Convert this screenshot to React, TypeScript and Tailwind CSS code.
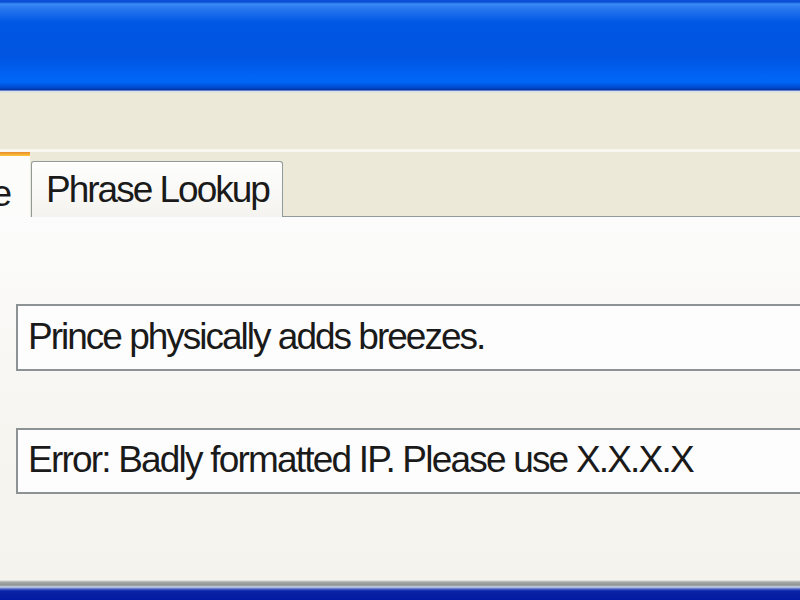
export default function App() {
  const font = { fontFamily: '"Liberation Sans", Arial, sans-serif' };

  return (
    <div className="w-[800px] h-[600px] overflow-hidden flex flex-col bg-[#ece9d8]" style={font}>
      {/* title bar */}
      <div className="h-[93px] shrink-0 bg-[linear-gradient(to_bottom,#0a4fd6_0px,#0a4fd6_2px,#3b8cf6_4px,#2a78f0_8px,#0058e4_22px,#0054e0_55px,#0063f4_76px,#0066f6_82px,#0048cc_88px,#00309e_90px,#cfd8ea_91px,#ece9d8_93px)]" />

      {/* beige strip */}
      <div className="h-[56px] shrink-0 bg-[#ece9d8]" />
      <div className="h-[3px] shrink-0 bg-[#f8f6ee]" />

      {/* tab row */}
      <div className="h-[65px] shrink-0 flex items-end bg-[#ece9d8]">
        <div className="w-[30px] h-[65px] flex flex-col bg-[#fcfcfb]">
          <div className="h-[4px] bg-[linear-gradient(to_bottom,#e68b2c,#ffc73c)]" />
          <div className="flex-1 flex justify-end overflow-hidden pr-[20px] pt-[10px]">
            <span className="whitespace-nowrap text-[37px] tracking-[-2px] text-[#1a1a1a]">Phrase</span>
          </div>
        </div>
        <div className="w-[252px] h-[56px] ml-[1px] border border-b-0 border-[#919b9c] rounded-t-[3px] bg-[linear-gradient(to_bottom,#fefefe,#f4f3ef)] flex items-center pl-[14px]">
          <span className="whitespace-nowrap text-[37px] tracking-[-2px] text-[#1a1a1a] leading-none">Phrase Lookup</span>
        </div>
        <div className="flex-1 h-px bg-[#919b9c]" />
      </div>

      {/* panel */}
      <div className="flex-1 flex flex-col bg-[linear-gradient(to_bottom,#fcfcfc,#f6f5f0_60%,#f4f3ee)] pl-[16px] pt-[87px]">
        <div className="h-[67px] -mr-[20px] border-2 border-[#8d9294] bg-[#fdfdfd] flex items-center pl-[10px] pb-[2px]">
          <span className="whitespace-nowrap text-[37px] tracking-[-2px] text-[#1a1a1a] leading-none">Prince physically adds breezes.</span>
        </div>
        <div className="h-[66px] mt-[57px] -mr-[20px] border-2 border-[#8d9294] bg-[#fdfdfd] flex items-center pl-[10px] pb-[4px]">
          <span className="whitespace-nowrap text-[37px] tracking-[-1.8px] text-[#1a1a1a] leading-none">Error: Badly formatted IP. Please use X.X.X.X</span>
        </div>
      </div>

      {/* bottom edge */}
      <div className="h-[22px] shrink-0 bg-[linear-gradient(to_bottom,#f4f3ee_0px,#f4f3ee_2px,#a7aaa9_4px,#8f9493_7px,#c8d3e6_9px,#4a62c8_11px,#0a22a4_13px,#001aa0_22px)]" />
    </div>
  );
}
